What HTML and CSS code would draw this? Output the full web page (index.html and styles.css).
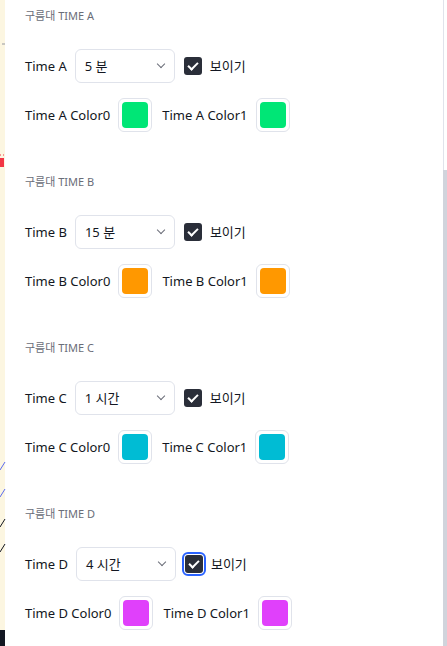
FILE: index.html
```html
<!DOCTYPE html>
<html lang="ko">
  <head>
    <meta charset="UTF-8" />
    <meta name="viewport" content="width=device-width, initial-scale=1.0" />
    <title>구름대 설정</title>
    <link rel="stylesheet" href="styles.css">
  </head>
  <body>
    <div id="chart-edge">
      <svg width="6" height="646" viewBox="0 0 6 646">
        <line x1="2" y1="44" x2="5" y2="44" stroke="#9598a1" stroke-width="1" />
        <line x1="0" y1="155" x2="5" y2="155" stroke="#f23645" stroke-width="1" stroke-dasharray="1 2" />
        <rect x="0" y="158" width="4" height="9" fill="#f23645" />
        <line x1="0" y1="470" x2="5" y2="462" stroke="#5b6cf0" stroke-width="1" />
        <line x1="0" y1="497" x2="5" y2="489" stroke="#5b6cf0" stroke-width="1" />
        <line x1="0" y1="527" x2="5" y2="519" stroke="#131722" stroke-width="1" />
        <line x1="0" y1="552" x2="5" y2="544" stroke="#131722" stroke-width="1" />
        <rect x="0" y="630" width="5" height="16" fill="#131722" />
      </svg>
    </div>

    <div id="settings">
      <div class="section">
        <div class="section-title">구름대 TIME A</div>
        <div class="row">
          <span class="label">Time A</span>
          <div class="select"><span>5 분</span><span class="chevron"></span></div>
          <span class="checkbox"></span>
          <span class="check-text">보이기</span>
        </div>
        <div class="row">
          <span class="label">Time A Color0</span>
          <div class="swatch"><span style="background: #00e676"></span></div>
          <span class="label second">Time A Color1</span>
          <div class="swatch"><span style="background: #00e676"></span></div>
        </div>
      </div>

      <div class="section">
        <div class="section-title">구름대 TIME B</div>
        <div class="row">
          <span class="label">Time B</span>
          <div class="select"><span>15 분</span><span class="chevron"></span></div>
          <span class="checkbox"></span>
          <span class="check-text">보이기</span>
        </div>
        <div class="row">
          <span class="label">Time B Color0</span>
          <div class="swatch"><span style="background: #ff9800"></span></div>
          <span class="label second">Time B Color1</span>
          <div class="swatch"><span style="background: #ff9800"></span></div>
        </div>
      </div>

      <div class="section">
        <div class="section-title">구름대 TIME C</div>
        <div class="row">
          <span class="label">Time C</span>
          <div class="select"><span>1 시간</span><span class="chevron"></span></div>
          <span class="checkbox"></span>
          <span class="check-text">보이기</span>
        </div>
        <div class="row">
          <span class="label">Time C Color0</span>
          <div class="swatch"><span style="background: #00bcd4"></span></div>
          <span class="label second">Time C Color1</span>
          <div class="swatch"><span style="background: #00bcd4"></span></div>
        </div>
      </div>

      <div class="section">
        <div class="section-title">구름대 TIME D</div>
        <div class="row">
          <span class="label">Time D</span>
          <div class="select"><span>4 시간</span><span class="chevron"></span></div>
          <span class="checkbox focused"></span>
          <span class="check-text">보이기</span>
        </div>
        <div class="row">
          <span class="label">Time D Color0</span>
          <div class="swatch"><span style="background: #e040fb"></span></div>
          <span class="label second">Time D Color1</span>
          <div class="swatch"><span style="background: #e040fb"></span></div>
        </div>
      </div>
    </div>

    <div id="scrollbar">
      <div class="track"></div>
      <div class="thumb"></div>
    </div>
  </body>
</html>
```

FILE: styles.css
```css
body {
  font-family: "Noto Sans", "Noto Sans CJK KR", sans-serif;
  background-color: #ffffff;
  color: #131722;
  margin: 0;
  padding: 0;
  display: flex;
  height: 646px;
  overflow: hidden;
}
#chart-edge {
  width: 5px;
  flex: none;
  background-color: #fcf6e1;
}
#chart-edge svg {
  display: block;
}
#settings {
  flex: 1;
  padding: 8px 0 0 20px;
}
.section {
  height: 166px;
}
.section-title {
  font-size: 11px;
  line-height: 16px;
  color: #6a6d78;
  margin-bottom: 25px;
}
.row {
  display: flex;
  align-items: center;
  height: 34px;
  margin-bottom: 15px;
  font-size: 13px;
  line-height: 18px;
}
.label {
  margin-right: 8px;
}
.label.second {
  margin-left: 10px;
}
.select {
  width: 100px;
  height: 34px;
  box-sizing: border-box;
  border: 1px solid #e0e3eb;
  border-radius: 6px;
  display: flex;
  align-items: center;
  justify-content: space-between;
  padding: 0 10px 0 9px;
}
.chevron {
  width: 5px;
  height: 5px;
  border-right: 1.2px solid #6a6d78;
  border-bottom: 1.2px solid #6a6d78;
  transform: rotate(45deg);
  margin-top: -4px;
}
.checkbox {
  position: relative;
  width: 18px;
  height: 18px;
  margin-left: 9px;
  border-radius: 3px;
  background-color: #2a2e39;
}
.checkbox::after {
  content: "";
  position: absolute;
  left: 6px;
  top: 3px;
  width: 4px;
  height: 8px;
  border-right: 2px solid #ffffff;
  border-bottom: 2px solid #ffffff;
  transform: rotate(45deg);
}
.checkbox.focused {
  outline: 2px solid #2962ff;
  outline-offset: 1px;
}
.check-text {
  margin-left: 8px;
}
.swatch {
  width: 34px;
  height: 34px;
  box-sizing: border-box;
  border: 1px solid #e0e3eb;
  border-radius: 6px;
  display: flex;
  align-items: center;
  justify-content: center;
}
.swatch span {
  width: 26px;
  height: 26px;
  border-radius: 4px;
}
#scrollbar {
  width: 4px;
  flex: none;
  display: flex;
  flex-direction: column;
}
.track {
  height: 170px;
  border-left: 1px solid #e0e3eb;
}
.thumb {
  flex: 1;
  background-color: #d1d4dc;
}
```
